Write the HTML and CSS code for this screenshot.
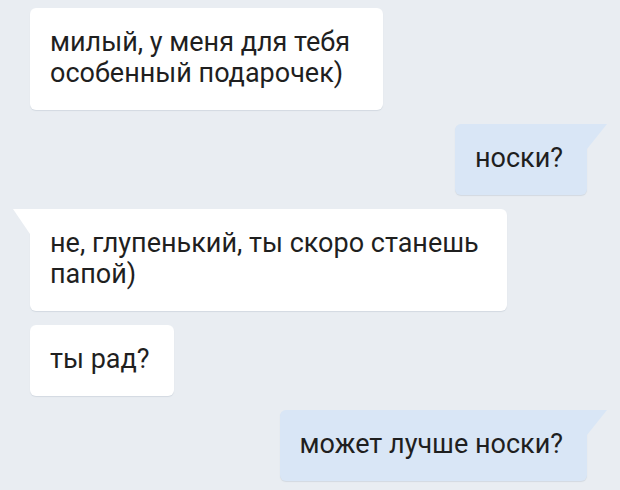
FILE: index.html
```html
<!DOCTYPE html>
<html lang="ru">
<head>
    <meta charset="UTF-8" />
    <title>Диалог</title>
    <link rel="stylesheet" href="styles.css">
</head>
<body>

<div class="chat">
    <!-- входящее -->
    <div class="msg in msg-first">милый, у меня для тебя<br>особенный подарочек)</div>
    <div class="msg out tail">носки?</div>
    <div class="msg in tail msg-long">не, глупенький, ты скоро станешь<br>папой)</div>
    <div class="msg in">ты рад?</div>
    <div class="msg out tail">может лучше носки?</div>
</div>

</body>
</html>
```

FILE: styles.css
```css
body {
    margin: 0;
    background-color: #e9edf2;
    font-family: Roboto, "Liberation Sans", sans-serif;
}
.chat {
    display: flex;
    flex-direction: column;
    gap: 14px;
    padding: 8px 33px 10px 30px;
}
.msg {
    position: relative;
    padding: 19px 24px 21px 20px;
    font-size: 27px;
    line-height: 31px;
    color: #1f1f1f;
    border-radius: 6px;
    box-shadow: 0 1px 1px #d3d9e1;
}
.in {
    align-self: flex-start;
    background-color: #ffffff;
}
.out {
    align-self: flex-end;
    background-color: #d9e6f6;
}
.msg-first {
    width: 309px;
}
.msg-long {
    width: 433px;
}
.tail::after {
    content: "";
    position: absolute;
    top: 0;
    width: 0;
    height: 0;
    border-top: 25px solid transparent;
}
.out.tail {
    border-top-right-radius: 0;
}
.in.tail {
    border-top-left-radius: 0;
}
.out.tail::after {
    right: -20px;
    border-top-color: #d9e6f6;
    border-right: 20px solid transparent;
}
.in.tail::after {
    left: -17px;
    border-top-color: #ffffff;
    border-left: 17px solid transparent;
}
```
